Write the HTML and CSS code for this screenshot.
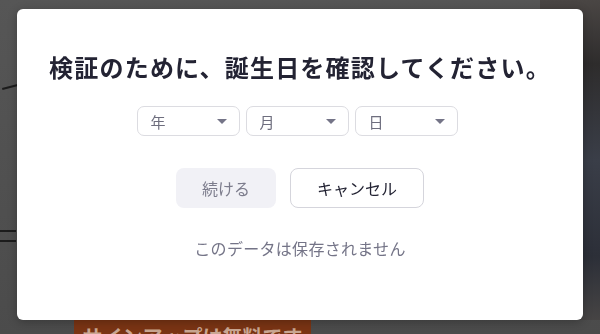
FILE: index.html
```html
<!DOCTYPE html>
<html lang="ja">

<head>
  <meta charset="UTF-8">
  <title>誕生日の確認</title>
  <link rel="stylesheet" href="styles.css">
</head>

<body>
  <!-- 背景のページ -->
  <div class="page">
    <div class="hero">
      <div class="hero-text">
        <span class="stroke stroke-1"></span>
        <span class="stroke stroke-2"></span>
        <span class="stroke stroke-3"></span>
      </div>
      <div class="hero-photo"></div>
    </div>
    <div class="signup-row">
      <a class="signup-btn" href="#">サインアップは無料です</a>
    </div>
  </div>

  <!-- 年齢確認モーダル -->
  <div class="overlay">
    <div class="modal">
      <h1 class="modal-title">検証のために、誕生日を確認してください。</h1>

      <div class="birth-selects">
        <div class="select-box">
          <span>年</span>
          <span class="caret"></span>
        </div>
        <div class="select-box">
          <span>月</span>
          <span class="caret"></span>
        </div>
        <div class="select-box">
          <span>日</span>
          <span class="caret"></span>
        </div>
      </div>

      <div class="actions">
        <button class="btn btn-continue" disabled>続ける</button>
        <button class="btn btn-cancel">キャンセル</button>
      </div>

      <p class="note">このデータは保存されません</p>
    </div>
  </div>
</body>

</html>
```

FILE: styles.css
```css
body {
  margin: 0;
  padding: 0;
  height: 334px;
  overflow: hidden;
  background: #4c4c4c;
  font-family: 'Noto Sans CJK JP', 'Noto Sans', sans-serif;
}

/* 背景ページ */
.page {
  height: 334px;
  display: flex;
  flex-direction: column;
  background: linear-gradient(180deg, #565656 0%, #4b4b4b 100%);
}

.hero {
  flex: 1;
  display: flex;
}

.hero-text {
  flex: 1;
  position: relative;
}

.stroke {
  position: absolute;
  height: 2px;
  background: #1c1c1c;
}

.stroke-1 {
  top: 86px;
  left: 2px;
  width: 16px;
  transform: rotate(-14deg);
}

.stroke-2 {
  top: 230px;
  left: 0;
  width: 16px;
}

.stroke-3 {
  top: 240px;
  left: 0;
  width: 16px;
}

.hero-photo {
  width: 60px;
  background: linear-gradient(180deg, #4a4644 0%, #2e2c2c 20%, #3a3e48 50%, #2c2f38 80%, #464444 100%);
}

.signup-row {
  height: 14px;
  padding-left: 74px;
  display: flex;
}

.signup-btn {
  width: 237px;
  height: 14px;
  background: #7a3414;
  color: #c9a692;
  font-size: 20px;
  font-weight: bold;
  line-height: 34px;
  text-align: center;
  text-decoration: none;
  overflow: hidden;
}

/* モーダル */
.overlay {
  position: fixed;
  top: 0;
  left: 0;
  width: 100%;
  height: 100%;
}

.modal {
  position: absolute;
  top: 9px;
  left: 17px;
  width: 566px;
  height: 311px;
  box-sizing: border-box;
  padding-top: 42px;
  background: #fff;
  border-radius: 6px;
  box-shadow: 0 2px 10px rgba(0, 0, 0, 0.25);
  display: flex;
  flex-direction: column;
  align-items: center;
}

.modal-title {
  margin: 0;
  color: #232333;
  font-size: 24px;
  font-weight: bold;
  line-height: 32px;
  letter-spacing: 1.2px;
}

.birth-selects {
  display: flex;
  gap: 6px;
  margin: 23px 6px 0 0;
}

.select-box {
  width: 103px;
  height: 30px;
  box-sizing: border-box;
  padding: 0 12px 0 13px;
  border: 1px solid #dcdce1;
  border-radius: 7px;
  display: flex;
  align-items: center;
  justify-content: space-between;
  color: #6e6e7e;
  font-size: 15px;
}

.caret {
  width: 0;
  height: 0;
  border-left: 5px solid transparent;
  border-right: 5px solid transparent;
  border-top: 5px solid #747487;
}

.actions {
  display: flex;
  gap: 14px;
  margin-top: 32px;
}

.btn {
  height: 40px;
  border-radius: 8px;
  font-family: 'Noto Sans CJK JP', 'Noto Sans', sans-serif;
  font-size: 16px;
  cursor: pointer;
}

.btn-continue {
  width: 100px;
  background: #f1f1f6;
  border: none;
  color: #7c7c8c;
}

.btn-cancel {
  width: 134px;
  background: #fff;
  border: 1px solid #d5d5dc;
  color: #232333;
}

.note {
  margin: 28px 0 0;
  color: #747487;
  font-size: 16px;
  line-height: 24px;
  letter-spacing: 0.3px;
}
```
